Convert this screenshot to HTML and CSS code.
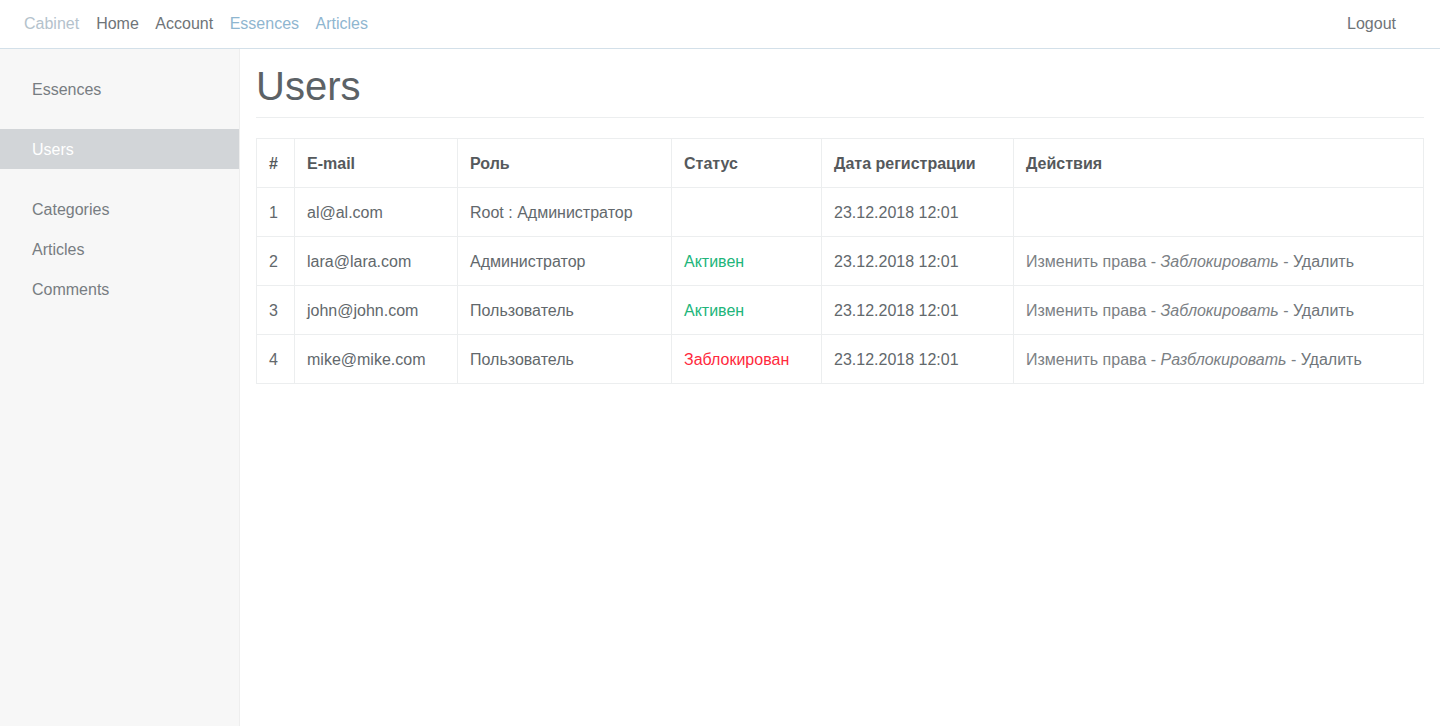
FILE: index.html
```html
<!DOCTYPE html>
<html lang="ru">
<head>
<meta charset="utf-8">
<title>Users</title>
<link rel="stylesheet" href="styles.css">
</head>
<body>
<header class="topbar">
  <nav class="topnav">
    <a class="brand" href="#">Cabinet</a>
    <a class="nav-link" href="#">Home</a>
    <a class="nav-link" href="#">Account</a>
    <a class="nav-link nav-link-blue" href="#">Essences</a>
    <a class="nav-link nav-link-blue" href="#">Articles</a>
  </nav>
  <a class="logout" href="#">Logout</a>
</header>
<div class="layout">
  <aside class="sidebar">
    <ul class="side-group">
      <li><a class="side-link" href="#">Essences</a></li>
    </ul>
    <ul class="side-group">
      <li><a class="side-link active" href="#">Users</a></li>
    </ul>
    <ul class="side-group">
      <li><a class="side-link" href="#">Categories</a></li>
      <li><a class="side-link" href="#">Articles</a></li>
      <li><a class="side-link" href="#">Comments</a></li>
    </ul>
  </aside>
  <main class="content">
    <h1 class="page-title">Users</h1>
    <table class="users">
      <colgroup>
        <col class="c-num"><col class="c-mail"><col class="c-role"><col class="c-status"><col class="c-date"><col class="c-act">
      </colgroup>
      <thead>
        <tr><th>#</th><th>E-mail</th><th>Роль</th><th>Статус</th><th>Дата регистрации</th><th>Действия</th></tr>
      </thead>
      <tbody>
        <tr><td>1</td><td>al@al.com</td><td>Root : Администратор</td><td></td><td>23.12.2018 12:01</td><td></td></tr>
        <tr><td>2</td><td>lara@lara.com</td><td>Администратор</td><td class="ok">Активен</td><td>23.12.2018 12:01</td><td class="acts"><a href="#">Изменить права</a> - <a class="it" href="#">Заблокировать</a> - <a class="del" href="#">Удалить</a></td></tr>
        <tr><td>3</td><td>john@john.com</td><td>Пользователь</td><td class="ok">Активен</td><td>23.12.2018 12:01</td><td class="acts"><a href="#">Изменить права</a> - <a class="it" href="#">Заблокировать</a> - <a class="del" href="#">Удалить</a></td></tr>
        <tr><td>4</td><td>mike@mike.com</td><td>Пользователь</td><td class="bad">Заблокирован</td><td>23.12.2018 12:01</td><td class="acts"><a href="#">Изменить права</a> - <a class="it" href="#">Разблокировать</a> - <a class="del" href="#">Удалить</a></td></tr>
      </tbody>
    </table>
  </main>
</div>
</body>
</html>
```
FILE: styles.css
```css
* { box-sizing: border-box; }
html, body { margin: 0; padding: 0; }
body {
  font-family: "Liberation Sans", Arial, sans-serif;
  font-size: 16px;
  line-height: 1.5;
  color: #636b6f;
  background: #fff;
  height: 726px;
  display: flex;
  flex-direction: column;
}
a { text-decoration: none; color: inherit; }

.topbar {
  height: 49px;
  border-bottom: 1px solid #d3e0e9;
  display: flex;
  align-items: center;
  justify-content: space-between;
  padding: 0 44px 0 24px;
  flex: none;
}
.topnav { display: flex; align-items: center; }
.brand { color: #b4c2cc; margin-right: 17px; }
.nav-link { color: #6f7478; margin-right: 16.5px; }
.nav-link-blue { color: #8fb6d0; }
.logout { color: #6f7478; }

.layout { display: flex; flex: 1; }
.sidebar {
  width: 240px;
  flex: none;
  background: #f7f7f7;
  border-right: 1px solid #eeeeee;
  padding-top: 20px;
}
.side-group { list-style: none; margin: 0 0 20px; padding: 0; }
.side-link {
  display: block;
  height: 40px;
  line-height: 38px;
  padding: 2px 0 0 32px;
  color: #777d82;
}
.side-link.active { background: #d2d5d8; color: #fff; }

.content { flex: 1; padding: 0 16px; }
.page-title {
  font-weight: 400;
  font-size: 40px;
  line-height: 48px;
  margin: 13px 0 0;
  padding-bottom: 7px;
  border-bottom: 1px solid #eceeef;
  color: #5c6266;
}

.users {
  margin-top: 20px;
  width: 100%;
  border-collapse: collapse;
  table-layout: fixed;
  border: 1px solid #eceeef;
}
.c-num { width: 38px; }
.c-mail { width: 163px; }
.c-role { width: 214px; }
.c-status { width: 150px; }
.c-date { width: 192px; }
.users th, .users td {
  border: 1px solid #eceeef;
  padding: 13px 12px 11px;
  height: 49px;
  text-align: left;
  vertical-align: top;
  white-space: nowrap;
}
.users th { font-weight: 700; color: #55595c; }
.users td { color: #62686c; }
.users td.ok { color: #21b57a; }
.users td.bad { color: #ff2a3d; }
.users td.acts { color: #7b8084; }
.acts a { color: #7b8084; }
.acts .it { font-style: italic; }
.acts .del { color: #6f757a; }
```
